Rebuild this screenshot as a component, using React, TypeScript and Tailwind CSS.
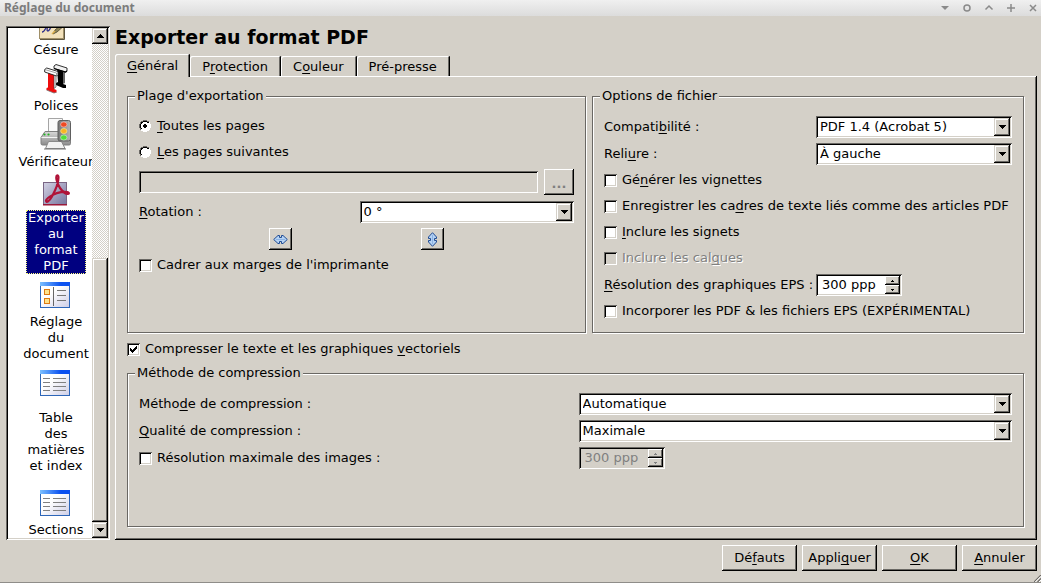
import { useState, type ReactNode } from "react";

const SUNKEN =
  "shadow-[inset_1px_1px_0_#6a6864,inset_-1px_-1px_0_#fff,inset_2px_2px_0_#000,inset_-2px_-2px_0_#d4d0c8]";
const RAISED =
  "bg-[#d4d0c8] shadow-[inset_-1px_-1px_0_#000,inset_1px_1px_0_#fff,inset_-2px_-2px_0_#6a6864]";
const RAISED_SOFT =
  "bg-[#d4d0c8] shadow-[inset_-1px_-1px_0_#000,inset_1px_1px_0_#d4d0c8,inset_-2px_-2px_0_#6a6864,inset_2px_2px_0_#fff]";

/* Text with the access key marked by an underscore before it. */
function Key({ text }: { text: string }) {
  const at = text.indexOf("_");
  if (at < 0) return <>{text}</>;
  return (
    <>
      {text.slice(0, at)}
      <u className="underline decoration-1 underline-offset-2 [text-decoration-skip-ink:none]">{text[at + 1]}</u>
      {text.slice(at + 2)}
    </>
  );
}

function Arrow({ up = false, small = false }: { up?: boolean; small?: boolean }) {
  return (
    <svg
      className={small ? "h-[2px] w-[3px]" : "h-[4px] w-[7px]"}
      viewBox={small ? "0 0 3 2" : "0 0 7 4"}
      shapeRendering="crispEdges"
      fill="currentColor"
    >
      {small ? (
        <path d={up ? "M1 0h1v1h1v1H0V1h1z" : "M0 0h3v1H2v1H1V1H0z"} />
      ) : (
        <path d={up ? "M3 0h1v1h1v1h1v1h1v1H0V3h1V2h1V1h1z" : "M0 0h7v1H6v1H5v1H4v1H3V3H2V2H1V1H0z"} />
      )}
    </svg>
  );
}

function Combo({ id, value }: { id: string; value: string }) {
  return (
    <div className={`grid h-[22px] min-w-0 bg-white p-[2px] ${SUNKEN}`}>
      <select
        id={id}
        className="col-start-1 row-start-1 w-full min-w-0 appearance-none bg-transparent px-[2px] leading-[18px] outline-none"
      >
        <option>{value}</option>
      </select>
      <span
        className={`pointer-events-none col-start-1 row-start-1 flex h-[18px] w-4 items-center justify-center justify-self-end ${RAISED_SOFT}`}
      >
        <Arrow />
      </span>
    </div>
  );
}

function Spin({ id, disabled = false, label }: { id: string; disabled?: boolean; label?: string }) {
  return (
    <div
      className={`flex h-[22px] w-[86px] p-[2px] ${SUNKEN} ${disabled ? "bg-[#d4d0c8] text-[#808080]" : "bg-white"}`}
    >
      <input
        id={id}
        aria-label={label}
        disabled={disabled}
        defaultValue="300 ppp"
        className="min-w-0 flex-1 bg-transparent pl-1 leading-[18px] outline-none"
      />
      <div className="flex w-[15px] flex-col">
        <button type="button" aria-label="Augmenter" disabled={disabled} className={`flex h-[9px] items-center justify-center ${RAISED}`}>
          <Arrow up small />
        </button>
        <button type="button" aria-label="Diminuer" disabled={disabled} className={`flex h-[9px] items-center justify-center ${RAISED}`}>
          <Arrow small />
        </button>
      </div>
    </div>
  );
}

function Check({ text, checked = false, disabled = false }: { text: string; checked?: boolean; disabled?: boolean }) {
  return (
    <label className={`flex h-[22px] items-center gap-[5px] whitespace-nowrap ${disabled ? "text-[#808080] [text-shadow:1px_1px_0_#fff]" : ""}`}>
      <span className="grid size-[13px] shrink-0 place-items-center">
        <input
          type="checkbox"
          defaultChecked={checked}
          disabled={disabled}
          className={`peer col-start-1 row-start-1 size-[13px] appearance-none bg-white disabled:bg-[#d4d0c8] ${SUNKEN}`}
        />
        <svg viewBox="0 0 7 7" className="pointer-events-none col-start-1 row-start-1 hidden size-[7px] peer-checked:block" shapeRendering="crispEdges">
          <path d="M0 2h1v1h1v1h1V3h1V2h1V1h1V0h1v3H6v1H5v1H4v1H3v1H2V6H1V5H0z" />
        </svg>
      </span>
      <span>
        <Key text={text} />
      </span>
    </label>
  );
}

function Radio({ text, checked = false }: { text: string; checked?: boolean }) {
  return (
    <label className="flex h-[22px] items-center gap-[6px]">
      <span className="grid size-3 shrink-0 place-items-center">
        <input
          type="radio"
          name="plage"
          defaultChecked={checked}
          className="peer col-start-1 row-start-1 size-3 appearance-none rounded-full"
        />
        <svg
          viewBox="0 0 12 12"
          shapeRendering="crispEdges"
          className="pointer-events-none col-start-1 row-start-1 size-3 [&>.dot]:hidden peer-checked:[&>.dot]:block"
        >
          <path fill="#fff" d="M4 1h4v1h2v2h1v4h-1v2H8v1H4v-1H2V8H1V4h1V2h2z" />
          <path fill="#6a6864" d="M4 0h4v1H4zM2 1h2v1H2zM8 1h2v1H8zM1 2h1v2H1zM0 4h1v4H0zM1 8h1v2H1z" />
          <path fill="#000" d="M4 1h4v1H4zM2 2h2v1H2zM8 2h2v1H8zM2 3h1v1H2zM1 4h1v4H1zM2 8h1v1H2z" />
          <path fill="#fff" d="M10 2h1v2h-1zM11 4h1v4h-1zM10 8h1v2h-1zM8 10h2v1H8zM2 10h2v1H2zM4 11h4v1H4z" />
          <path className="dot" fill="#000" d="M5 4h2v1h1v2H7v1H5V7H4V5h1z" />
        </svg>
      </span>
      <span>
        <Key text={text} />
      </span>
    </label>
  );
}

function Group({ title, className = "", children }: { title: string; className?: string; children: ReactNode }) {
  return (
    <fieldset
      className={`min-w-0 border border-[#6a6864] px-[11px] pb-[10px] shadow-[1px_1px_0_#fff,inset_1px_1px_0_#fff] ${className}`}
    >
      <legend className="-ml-1 bg-[#d4d0c8] px-[2px] leading-4">{title}</legend>
      {children}
    </fieldset>
  );
}

/* ---------- icons ---------- */

function HyphenIcon() {
  return (
    <svg width="26" height="26" viewBox="0 0 26 26">
      <rect x="0.5" y="0.5" width="24" height="24" fill="#f3e2bc" stroke="#a08f68" />
      <path d="M1 25.500h24.500V2" fill="none" stroke="#5d553f" />
      <path d="M3 18c3 0 4-6 5-5s-1 4 1 4 2-5 5-5" fill="none" stroke="#2f2f8a" strokeWidth="1.300" />
      <path d="M14 20l2-4 8-7 2 2-8 7z" fill="#8d8459" stroke="#4d4630" strokeWidth=".8" />
      <path d="M13 20l3-3" stroke="#ddb04c" strokeWidth="1.500" />
    </svg>
  );
}

function FontsIcon() {
  return (
    <svg width="24" height="30" viewBox="0 0 24 30">
      <path d="M13 4l6 2v14l3 1v3l-3 0-7-3v-2l2-1z" fill="#000" />
      <path d="M19 6l2 0v13l-2 1z" fill="#666" />
      <path d="M10 2l2-1.500L23 4v3l-1.500 1L10 4.500z" fill="#f2f2f2" stroke="#1a1a1a" strokeWidth=".9" />
      <path d="M10 4.500L21.500 8 23 7" fill="none" stroke="#000" strokeWidth="1.300" />
      <path d="M4 8l6 2v15l2.500 1v2.500L10 29l-7.500-3v-2L4 23.500z" fill="#ee0d0d" />
      <path d="M10 10l2-1v14l-2 1.500z" fill="#e8e8e8" stroke="#333" strokeWidth=".6" />
      <path d="M2.500 26L10 29l2.500-.8" fill="none" stroke="#777" strokeWidth=".8" />
      <path d="M.7 5.500L2.700 4 14 7.500v3L12.500 12 .7 8z" fill="#fff" stroke="#1a1a1a" strokeWidth=".9" />
      <path d="M.7 5.500L12.500 9v3" fill="none" stroke="#777" strokeWidth=".7" />
    </svg>
  );
}

function PrinterIcon() {
  return (
    <svg width="32" height="32" viewBox="0 0 32 32">
      <defs>
        <linearGradient id="prBody" x1="0" y1="0" x2="0" y2="1">
          <stop offset="0" stopColor="#d8d8d8" />
          <stop offset="1" stopColor="#8c8c8c" />
        </linearGradient>
        <linearGradient id="prLamp" x1="0" y1="0" x2="1" y2="0">
          <stop offset="0" stopColor="#777" />
          <stop offset="1" stopColor="#b5b5b5" />
        </linearGradient>
      </defs>
      <path d="M8.500.5h14v14h-14z" fill="#fafafa" stroke="#a5a5a5" />
      <path d="M5 13.500h20l5.500 6v6q0 1.500-1.500 1.500H2.500Q1 27 1 25.500v-6z" fill="url(#prBody)" stroke="#808080" />
      <path d="M1.500 19.500h28" stroke="#f4f4f4" />
      <path d="M8.500 23.500h13l3.500 7H5.500z" fill="#f2f2f2" stroke="#8a8a8a" />
      <path d="M4 31h22" stroke="#777" />
      <circle cx="4.500" cy="16.500" r="1.100" fill="#24b324" />
      <circle cx="8.500" cy="16.500" r="1.100" fill="#24b324" />
      <rect x="18" y="2.500" width="12.500" height="20.500" rx="2" fill="url(#prLamp)" stroke="#5f5f5f" />
      <ellipse cx="23.800" cy="6.500" rx="3.200" ry="2.600" fill="#ee4a22" stroke="#fcc" strokeWidth=".6" />
      <ellipse cx="23.800" cy="13" rx="3.200" ry="2.600" fill="#f8b422" stroke="#fe9" strokeWidth=".6" />
      <ellipse cx="23.800" cy="19.500" rx="3.200" ry="2.600" fill="#52dd3a" stroke="#cfc" strokeWidth=".6" />
    </svg>
  );
}

function PdfIcon() {
  return (
    <svg width="28" height="32" viewBox="0 0 28 32">
      <defs>
        <linearGradient id="pdfBg" x1="0" y1="0" x2="1" y2="1">
          <stop offset="0" stopColor="#d3d2e4" />
          <stop offset="1" stopColor="#77759e" />
        </linearGradient>
      </defs>
      <rect x="1.500" y="8.500" width="23" height="22" fill="url(#pdfBg)" stroke="#7a6584" />
      <path d="M1 30.800h24" stroke="#9e1434" strokeWidth="1.400" />
      <path
        d="M15 1.500c-2 1 .5 9 3 12.500s6 6.500 8.500 5.800c1.500-1.800-3-2.300-7.500-1.600S5.500 22.500 4 26.500c0 2.500 3 1.500 6-4S16.500 9 16.500 3.500c0-1.500-.5-2.200-1.500-2z"
        fill="none"
        stroke="#b01238"
        strokeWidth="2.200"
        strokeLinejoin="round"
      />
    </svg>
  );
}

function PageIcon({ boxes = false }: { boxes?: boolean }) {
  return (
    <svg width="30" height="26" viewBox="0 0 30 26">
      <defs>
        <linearGradient id="pgBar" x1="0" y1="0" x2="1" y2="0">
          <stop offset="0" stopColor="#7cc0ff" />
          <stop offset=".7" stopColor="#0a50f0" />
          <stop offset="1" stopColor="#0a50f0" />
        </linearGradient>
        <linearGradient id="pgBody" x1="0" y1="0" x2="1" y2="1">
          <stop offset=".4" stopColor="#fff" />
          <stop offset="1" stopColor="#cdcde6" />
        </linearGradient>
      </defs>
      <rect x=".5" y=".5" width="29" height="25" fill="url(#pgBody)" stroke="#2d66b8" />
      <rect x="0" y="0" width="30" height="4" fill="url(#pgBar)" />
      {boxes ? (
        <>
          <path d="M13.500 5v19" stroke="#666" />
          <rect x="4.500" y="7.500" width="5" height="5" fill="#ffe48c" stroke="#dd7a12" />
          <rect x="4.500" y="16.500" width="5" height="5" fill="#ffe48c" stroke="#dd7a12" />
          <path d="M17 8.500h9M17 13.500h9M17 18.500h9" stroke="#777" />
        </>
      ) : (
        <path d="M3 8.500h7M13 8.500h13M3 12.500h7M13 12.500h13M3 16.500h7M13 16.500h13M3 20.500h7M13 20.500h13" stroke="#808080" />
      )}
    </svg>
  );
}

function FlipIcon({ vertical = false }: { vertical?: boolean }) {
  return (
    <svg width="15" height="15" viewBox="0 0 15 15" className={vertical ? "rotate-90" : ""}>
      <path
        d="M.7 7.500L5 3.500h1.500v2h2v-2H10l4.300 4-4.300 4H8.500v-2h-2v2H5z"
        fill="#b4d2f4"
        stroke="#204c94"
      />
      <path d="M3 7.500h9" stroke="#8db4e6" />
    </svg>
  );
}

const SECTIONS: { lines: string[]; icon: ReactNode; box: string }[] = [
  { lines: ["Césure"], icon: <HyphenIcon />, box: "h-[14px] items-end overflow-hidden pb-0.5 pr-2" },
  { lines: ["Polices"], icon: <FontsIcon />, box: "h-10 items-center pt-0.5" },
  { lines: ["Vérificateur"], icon: <PrinterIcon />, box: "h-10 items-center" },
  { lines: ["Exporter", "au", "format", "PDF"], icon: <PdfIcon />, box: "h-10 items-center" },
  { lines: ["Réglage", "du", "document"], icon: <PageIcon boxes />, box: "h-10 items-start pr-0.5 pt-2" },
  { lines: ["Table", "des", "matières", "et index"], icon: <PageIcon />, box: "h-12 items-start pr-0.5 pt-2" },
  { lines: ["Sections"], icon: <PageIcon />, box: "h-12 items-end pb-1.5 pr-0.5" },
];

function Sidebar() {
  const [selected, setSelected] = useState(3);
  return (
    <nav aria-label="Sections" className={`flex w-[104px] shrink-0 overflow-hidden bg-white p-[2px] ${SUNKEN}`}>
      <div className="min-w-0 flex-1 overflow-hidden">
        <ul className="w-24">
          {SECTIONS.map((s, i) => (
            <li key={s.lines[0]}>
              <button type="button" onClick={() => setSelected(i)} className="flex w-full flex-col items-center">
                <span className={`flex ${s.box}`}>{s.icon}</span>
                <span
                  className={`flex flex-col whitespace-nowrap px-[2px] leading-4 ${
                    i === selected ? "bg-[#000080] text-white outline-1 -outline-offset-1 outline-dotted outline-[#ffff7f]" : ""
                  }`}
                >
                  {s.lines.map((l) => (
                    <span key={l}>{l}</span>
                  ))}
                </span>
              </button>
            </li>
          ))}
        </ul>
      </div>
      <div className="flex w-4 shrink-0 flex-col bg-[conic-gradient(#fff_25%,#d4d0c8_0_50%,#fff_0_75%,#d4d0c8_0)] bg-[length:2px_2px]">
        <button type="button" aria-label="Défiler vers le haut" className={`flex h-4 shrink-0 items-center justify-center ${RAISED_SOFT}`}>
          <Arrow up />
        </button>
        <div className="flex-[214]" />
        <div className={`flex-[263] ${RAISED_SOFT}`} />
        <button type="button" aria-label="Défiler vers le bas" className={`flex h-4 shrink-0 items-center justify-center ${RAISED_SOFT}`}>
          <Arrow />
        </button>
      </div>
    </nav>
  );
}

const TABS = ["_Général", "P_rotection", "C_ouleur", "Pré-presse"];

function Tabs() {
  const [active, setActive] = useState(0);
  return (
    <div role="tablist" className="relative -mb-px flex items-end">
      {TABS.map((t, i) => (
        <button
          key={t}
          type="button"
          role="tab"
          aria-selected={i === active}
          onClick={() => setActive(i)}
          className={`rounded-tl-[2px] rounded-tr-[1px] bg-[#d4d0c8] pl-3 shadow-[inset_-1px_0_0_#000,inset_1px_1px_0_#fff,inset_-2px_0_0_#6a6864] ${
            i === active ? "h-[23px] pr-3" : "mb-px h-5 pr-[13px] pt-0.5"
          }`}
        >
          <Key text={t} />
        </button>
      ))}
    </div>
  );
}

function TitleBar() {
  return (
    <header className="flex h-4 items-center justify-between bg-linear-to-b from-[#f0f0f0] to-[#dcdcdc] pl-1 pr-[3px] font-['Noto_Sans','Open_Sans',sans-serif] text-xs font-bold leading-4 text-[#7c7c7c]">
      <span>Réglage du document</span>
      <div className="flex items-center gap-[12px]">
        <button type="button" aria-label="Enrouler">
          <svg width="10" height="10" viewBox="0 0 10 10"><path d="M1 3h8L5 7z" fill="#8a8a8a" /></svg>
        </button>
        <button type="button" aria-label="Restaurer">
          <svg width="10" height="10" viewBox="0 0 10 10"><circle cx="5" cy="5" r="3" fill="none" stroke="#8a8a8a" strokeWidth="1.500" /></svg>
        </button>
        <button type="button" aria-label="Réduire">
          <svg width="10" height="10" viewBox="0 0 10 10"><path d="M1.500 6.500L5 3l3.500 3.500" fill="none" stroke="#8a8a8a" strokeWidth="1.500" /></svg>
        </button>
        <button type="button" aria-label="Agrandir">
          <svg width="10" height="10" viewBox="0 0 10 10"><path d="M5 1v8M1 5h8" stroke="#8a8a8a" strokeWidth="1.500" /></svg>
        </button>
        <button type="button" aria-label="Fermer">
          <svg width="10" height="10" viewBox="0 0 10 10"><path d="M2 2l6 6M8 2L2 8" stroke="#8a8a8a" strokeWidth="1.500" /></svg>
        </button>
      </div>
    </header>
  );
}

export default function App() {
  return (
    <div className="flex min-h-screen flex-col bg-[#d4d0c8] font-['DejaVu_Sans',sans-serif] text-[13px] leading-4 text-black">
      <TitleBar />
      <div className="flex flex-1 pl-1.5 pr-1 pt-2.5">
        <Sidebar />
        <main className="ml-[5px] flex min-w-0 flex-1 flex-col">
          <h1 className="mb-1.5 text-[19px] font-bold leading-[22px]">Exporter au format PDF</h1>
          <Tabs />
          <div
            role="tabpanel"
            className="flex flex-1 flex-col p-[13px] pl-3 pt-3 shadow-[inset_-1px_-1px_0_#000,inset_1px_1px_0_#fff,inset_-2px_-2px_0_#6a6864]"
          >
            <div className="grid grid-cols-[459fr_432fr] gap-1.5">
              <Group title="Plage d'exportation">
                <div className="flex flex-col gap-1 pt-[11px]">
                  <Radio text="_Toutes les pages" checked />
                  <Radio text="_Les pages suivantes" />
                </div>
                <div className="mt-1.5 flex items-center gap-1.5">
                  <input type="text" disabled aria-label="Pages à exporter" className={`h-[22px] min-w-0 flex-1 bg-[#d4d0c8] px-1 ${SUNKEN}`} />
                  <button type="button" disabled aria-label="Choisir les pages" className={`h-[26px] w-[30px] pt-1 font-bold text-[#808080] ${RAISED}`}>
                    ...
                  </button>
                </div>
                <div className="mt-1.5 grid grid-cols-2 items-center gap-1.5">
                  <label htmlFor="rotation"><Key text="_Rotation :" /></label>
                  <Combo id="rotation" value="0 °" />
                </div>
                <div className="mt-[5px] flex justify-evenly">
                  <button type="button" aria-label="Miroir horizontal" className={`flex h-[22px] w-[23px] items-center justify-center ${RAISED}`}>
                    <FlipIcon />
                  </button>
                  <button type="button" aria-label="Miroir vertical" className={`flex h-[22px] w-[23px] items-center justify-center ${RAISED}`}>
                    <FlipIcon vertical />
                  </button>
                </div>
                <div className="mt-1">
                  <Check text="Cadrer aux marges de l'imprimante" />
                </div>
              </Group>
              <Group title="Options de fichier">
                <div className="grid grid-cols-[207px_minmax(0,1fr)] items-center gap-[5px] pt-3">
                  <label htmlFor="compat"><Key text="Compati_bilité :" /></label>
                  <Combo id="compat" value="PDF 1.4 (Acrobat 5)" />
                  <label htmlFor="reliure"><Key text="Reli_ure :" /></label>
                  <Combo id="reliure" value="À gauche" />
                </div>
                <div className="mt-1 flex flex-col gap-1">
                  <Check text="Gé_nérer les vignettes" />
                  <Check text="Enregistrer les ca_dres de texte liés comme des articles PDF" />
                  <Check text="_Inclure les signets" />
                  <Check text="Inclure les cal_ques" disabled />
                </div>
                <div className="mt-[5px] grid grid-cols-[207px_minmax(0,1fr)] items-center gap-[5px]">
                  <label htmlFor="eps" className="whitespace-nowrap"><Key text="_Résolution des graphiques EPS :" /></label>
                  <Spin id="eps" />
                </div>
                <div className="mt-1">
                  <Check text="Incorporer les PDF & les fichiers EPS (EXPÉRIMENTAL)" />
                </div>
              </Group>
            </div>
            <div className="py-[5px]">
              <Check text="Compresser le texte et les graphiques _vectoriels" checked />
            </div>
            <Group title="Méthode de compression" className="flex-1">
              <div className="grid grid-cols-2 items-center gap-x-1.5 gap-y-[5px] pt-3">
                <label htmlFor="methode"><Key text="Métho_de de compression :" /></label>
                <Combo id="methode" value="Automatique" />
                <label htmlFor="qualite"><Key text="_Qualité de compression :" /></label>
                <Combo id="qualite" value="Maximale" />
                <Check text="Résolution maximale des images :" />
                <Spin id="resmax" label="Résolution maximale des images" disabled />
              </div>
            </Group>
          </div>
        </main>
      </div>
      <footer className="flex items-end justify-end border-b border-[#8f8d89] pr-1 pt-[5px]">
        <div className="flex gap-[5px] pb-[11px]">
          {["Dé_fauts", "Appli_quer", "_OK", "_Annuler"].map((b) => (
            <button key={b} type="button" className={`h-[26px] w-[75px] ${RAISED}`}>
              <Key text={b} />
            </button>
          ))}
        </div>
        <svg width="7" height="7" viewBox="0 0 7 7" className="-mr-1 -ml-[3px]" aria-hidden="true">
          <path d="M0 7L7 0M3.500 7L7 3.500" stroke="#6a6864" strokeWidth="1.200" />
          <path d="M1.300 7L7 1.300M5 7l2-2" stroke="#fff" />
        </svg>
      </footer>
    </div>
  );
}
